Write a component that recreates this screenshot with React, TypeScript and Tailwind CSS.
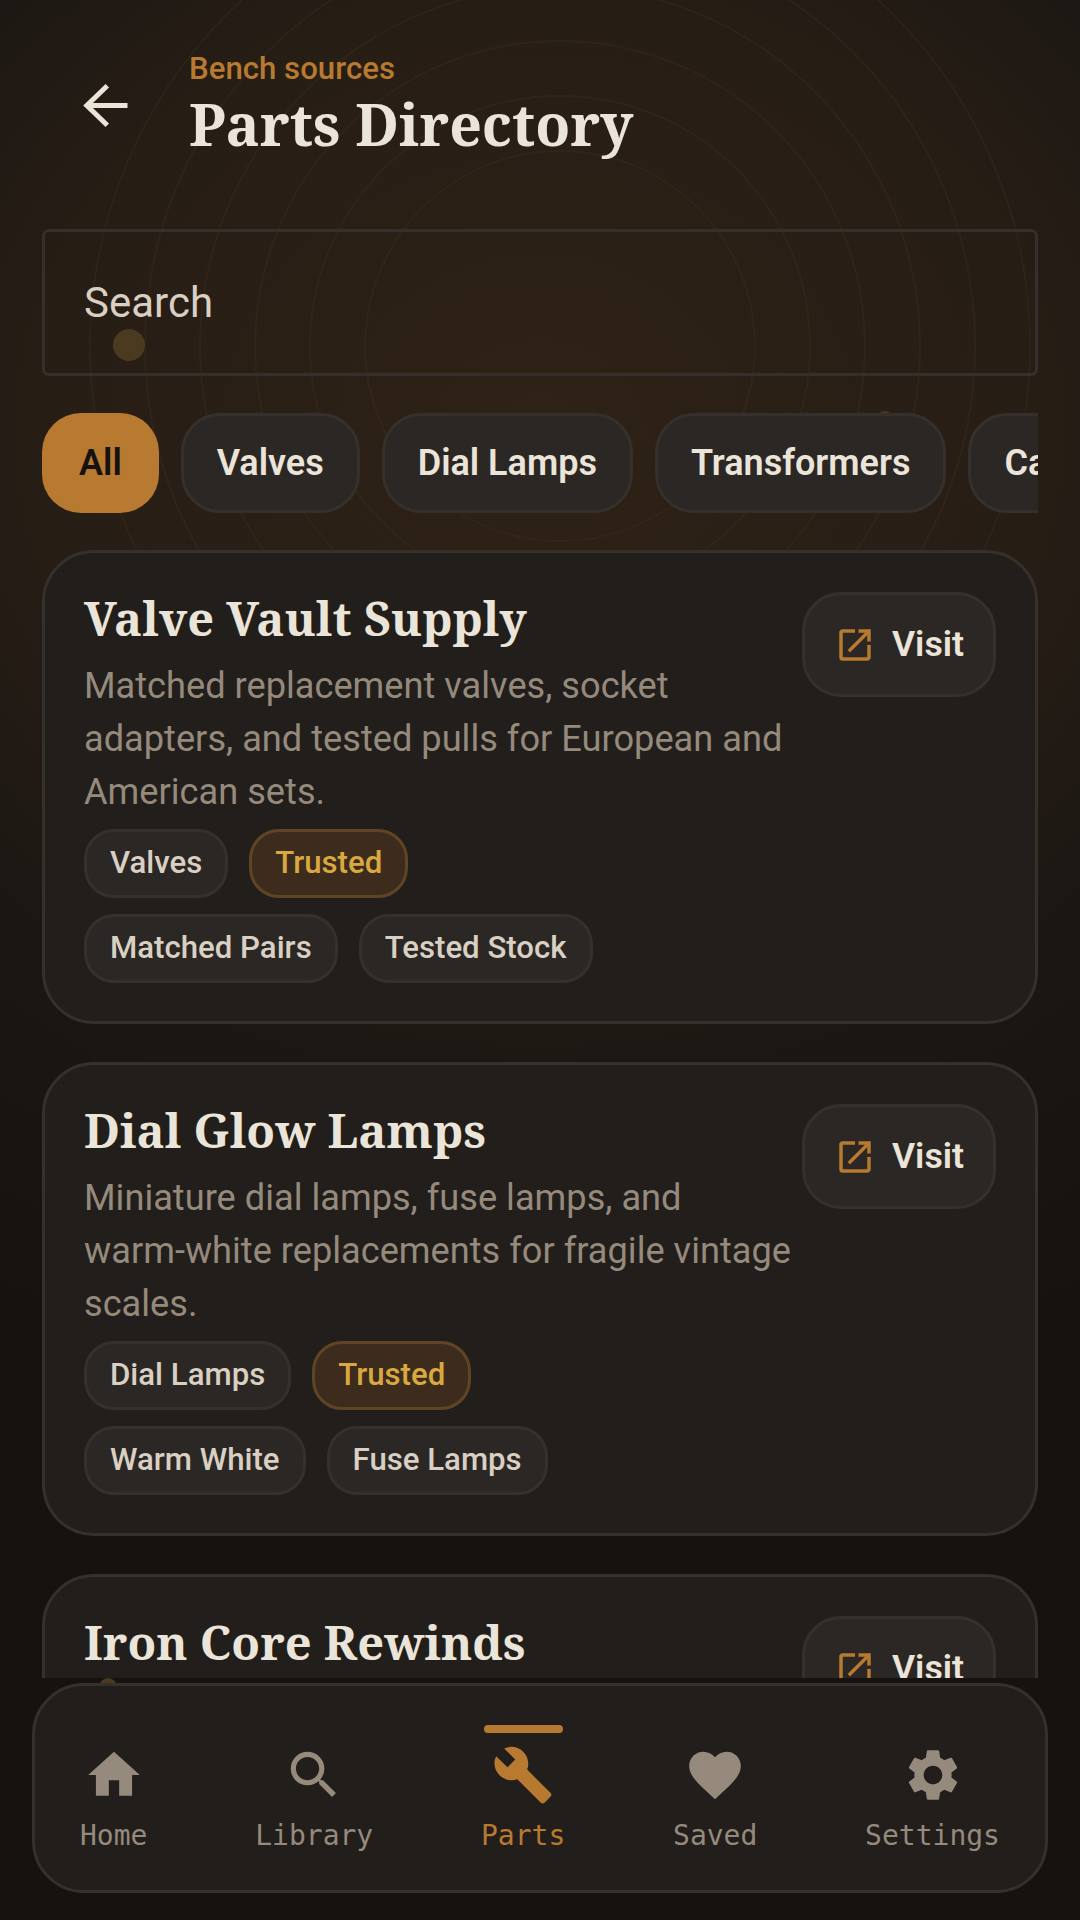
import { MdBuild, MdFavorite, MdHome, MdOpenInNew, MdSearch, MdSettings } from "react-icons/md";

type Part = {
  name: string;
  lines: string[];
  tags: string[][];
};

const filters = ["All", "Valves", "Dial Lamps", "Transformers", "Capacitors"];

const parts: Part[] = [
  {
    name: "Valve Vault Supply",
    lines: ["Matched replacement valves, socket", "adapters, and tested pulls for European and", "American sets."],
    tags: [["Valves", "Trusted"], ["Matched Pairs", "Tested Stock"]],
  },
  {
    name: "Dial Glow Lamps",
    lines: ["Miniature dial lamps, fuse lamps, and", "warm-white replacements for fragile vintage", "scales."],
    tags: [["Dial Lamps", "Trusted"], ["Warm White", "Fuse Lamps"]],
  },
  {
    name: "Iron Core Rewinds",
    lines: [],
    tags: [],
  },
];

const navItems = [
  { label: "Home", icon: MdHome },
  { label: "Library", icon: MdSearch },
  { label: "Parts", icon: MdBuild, active: true },
  { label: "Saved", icon: MdFavorite },
  { label: "Settings", icon: MdSettings },
];

const rings = [195, 250, 305, 360, 415, 470];

const Backdrop = () => (
  <div className="absolute inset-0 bg-[radial-gradient(ellipse_1150px_1000px_at_540px_430px,#2f2216_0%,#261d15_45%,#1c1713_65%,#151210_100%)]">
    <svg className="absolute inset-0" width="1080" height="1700" fill="none">
      {rings.map((r) => (
        <circle key={r} cx="560" cy="346" r={r} stroke="#3a2c1c" strokeOpacity="0.45" strokeWidth="2" />
      ))}
      <circle cx="129" cy="345" r="16" fill="#4a3a20" />
      <circle cx="885" cy="420" r="9" fill="#4a3a20" />
      <circle cx="108" cy="1687" r="9" fill="#4a3a20" />
    </svg>
  </div>
);

const Tag = ({ label }: { label: string }) => {
  const trusted = label === "Trusted";
  return (
    <span
      className={`h-[69px] px-[23px] flex items-center rounded-[30px] border-[3px] text-[31.2px] font-medium ${
        trusted
          ? "bg-[#3d2c1e] border-[#5f4526] text-[#d9a93f]"
          : "bg-[#2b2724] border-[#35302b] text-[#d9d0c3]"
      }`}
    >
      {label}
    </span>
  );
};

const PartCard = ({ part }: { part: Part }) => (
  <div className="h-[474px] rounded-[52px] border-[3px] border-[#35302a] bg-[#221e1b] p-[39px] shrink-0 flex gap-[6px] items-start">
    <div className="flex-1 min-w-0">
      <h2 className="-mt-[4px] font-['Noto_Serif','DejaVu_Serif',serif] font-bold text-[47px] leading-[60px] text-[#ebe4d8]">
        {part.name}
      </h2>
      {part.lines.length > 0 && (
        <p className="text-[36.2px] leading-[53px] text-[#958a7c] mt-[11px]">
          {part.lines.map((line) => (
            <span key={line} className="block whitespace-nowrap">
              {line}
            </span>
          ))}
        </p>
      )}
      {part.tags.length > 0 && (
        <div className="flex flex-col gap-[16px] mt-[11px]">
          {part.tags.map((row, i) => (
            <div key={i} className="flex gap-[21px]">
              {row.map((t) => (
                <Tag key={t} label={t} />
              ))}
            </div>
          ))}
        </div>
      )}
    </div>
    <button className="shrink-0 h-[105px] w-[194px] rounded-[39px] border-[3px] border-[#35302b] bg-[#2b2724] flex items-center justify-center gap-[16px] text-[35.75px] font-semibold text-[#ebe4d8]">
      <MdOpenInNew className="text-[#b87a30]" size={42} />
      Visit
    </button>
  </div>
);

const BottomNav = () => (
  <nav className="mx-[32px] mt-[5px] h-[210px] rounded-[52px] border-[3px] border-[#35302a] bg-[#221e1b] flex justify-between px-[45px] pt-[39px]">
    {navItems.map(({ label, icon: Icon, active }) => (
      <div
        key={label}
        className={`flex flex-col items-center ${active ? "text-[#b87a30]" : "text-[#958a7c]"}`}
      >
        <div className={`h-[8px] rounded-full mb-[11px] ${active ? "w-[79px] bg-[#b87a30]" : "w-0"}`} />
        <Icon size={62} />
        <span className="font-['DejaVu_Sans_Mono',monospace] text-[28px] leading-[36px] mt-[12px]">{label}</span>
      </div>
    ))}
  </nav>
);

export default function App() {
  return (
    <div className="relative w-[1080px] h-[1920px] overflow-hidden bg-[#151210] font-['Roboto',sans-serif]">
      <Backdrop />
      <div className="relative h-full flex flex-col">
        <div className="h-[1678px] shrink-0 overflow-hidden px-[42px] flex flex-col">
          <header className="shrink-0 flex items-center h-[229px] pl-[33px] pt-[50px] pb-[69px] gap-[51px]">
            <svg width="63" height="63" viewBox="0 0 24 24" fill="none" stroke="#ebe4d8" strokeWidth="1.9" className="shrink-0">
              <path d="M20 12H4.5M12.3 4.5 4.5 12l7.8 7.5" />
            </svg>
            <div>
              <div className="text-[31.2px] leading-[38px] font-medium text-[#b87a30]">Bench sources</div>
              <h1 className="font-['Noto_Serif','DejaVu_Serif',serif] font-bold text-[57.2px] leading-[72px] text-[#ebe4d8]">
                Parts Directory
              </h1>
            </div>
          </header>
          <div className="h-[147px] shrink-0 rounded-[7px] border-[3px] border-[#35302b] flex items-center px-[39px] text-[42px] text-[#d9d0c3]">
            Search
          </div>
          <div className="flex gap-[22px] mt-[37px] overflow-hidden shrink-0">
            {filters.map((f) => (
              <span
                key={f}
                className={`h-[100px] shrink-0 flex items-center rounded-[39px] text-[36px] font-semibold ${
                  f === "All"
                    ? "px-[37px] bg-[#b87a30] text-[#151210]"
                    : "px-[33px] bg-[#2b2724] border-[3px] border-[#35302b] text-[#ebe4d8]"
                }`}
              >
                {f}
              </span>
            ))}
          </div>
          <div className="flex flex-col gap-[38px] mt-[37px] shrink-0">
            {parts.map((p) => (
              <PartCard key={p.name} part={p} />
            ))}
          </div>
        </div>
        <BottomNav />
      </div>
    </div>
  );
}
